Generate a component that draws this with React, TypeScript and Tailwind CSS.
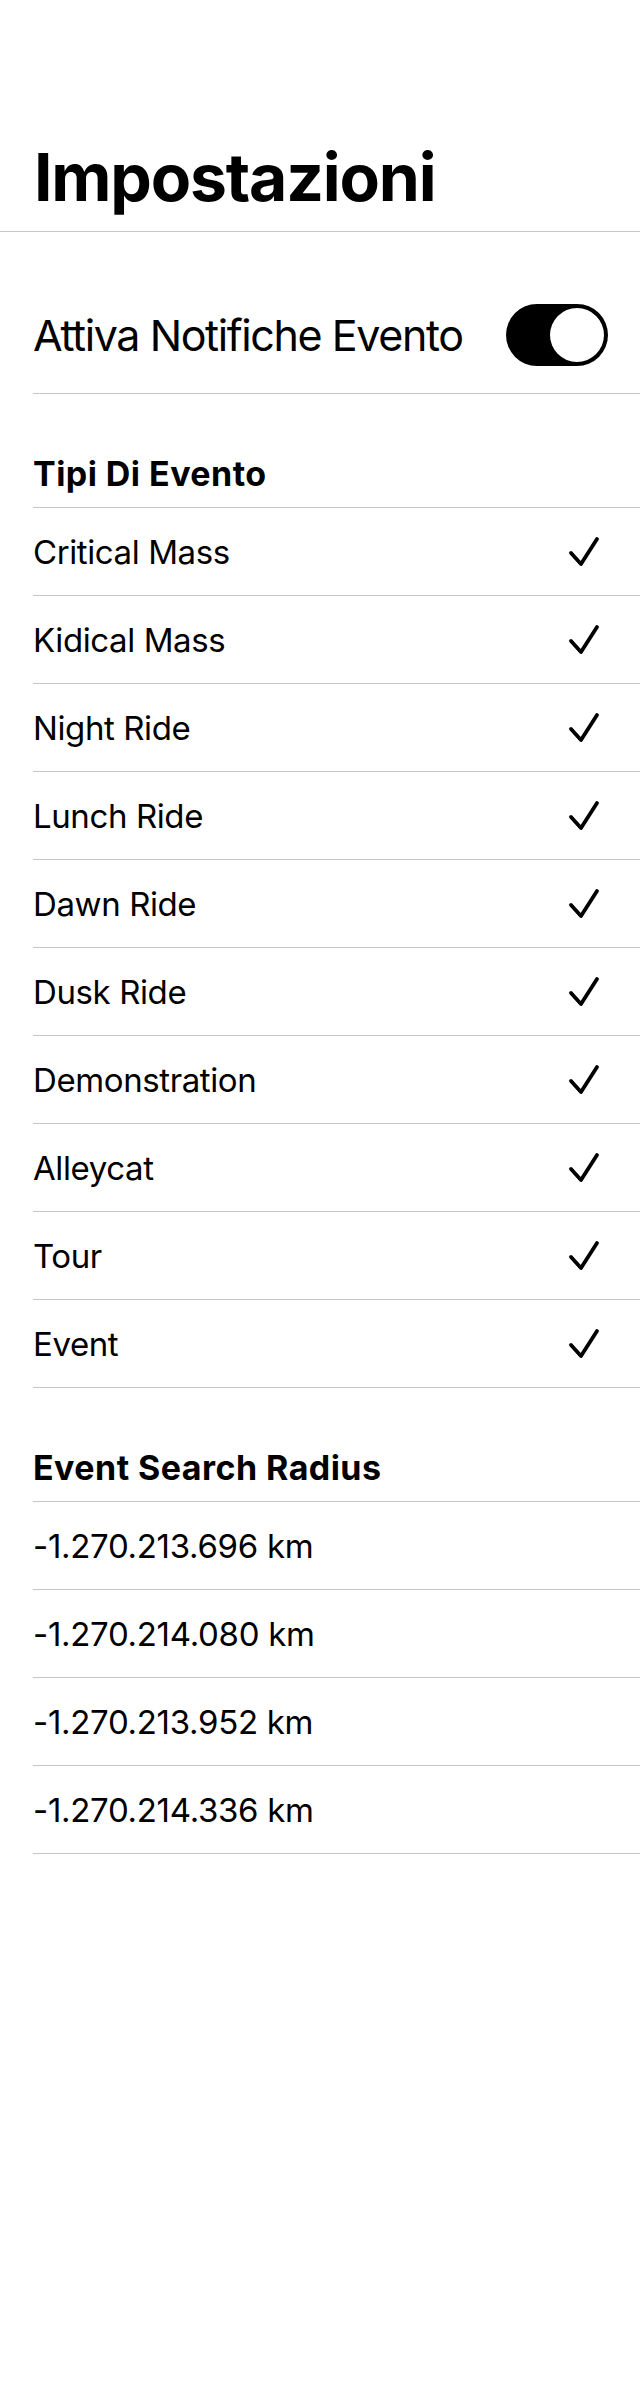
import React from "react";

const eventTypes = [
  "Critical Mass",
  "Kidical Mass",
  "Night Ride",
  "Lunch Ride",
  "Dawn Ride",
  "Dusk Ride",
  "Demonstration",
  "Alleycat",
  "Tour",
  "Event",
];

const radii = [
  "-1.270.213.696 km",
  "-1.270.214.080 km",
  "-1.270.213.952 km",
  "-1.270.214.336 km",
];

function Check() {
  return (
    <svg width="32" height="32" viewBox="0 0 32 32" fill="none" aria-hidden>
      <path
        d="M3 17 L13 28 L29 3"
        stroke="black"
        strokeWidth="3.8"
        strokeLinecap="round"
        strokeLinejoin="round"
      />
    </svg>
  );
}

export default function App() {
  return (
    <div
      className="w-[640px] min-h-[2400px] bg-white text-black"
      style={{ fontFamily: "Inter, 'Noto Sans', sans-serif" }}
    >
      <header className="pt-[144px] pb-[21px] pl-[34px] border-b border-[#c6c6c8]">
        <h1 className="text-[66px] leading-[66px] font-bold tracking-[-1.2px]">Impostazioni</h1>
      </header>

      <div className="ml-[33px]">
        <div className="flex items-center justify-between pt-[72px] pb-[27px] pr-[32px] border-b border-[#c6c6c8]">
          <span className="text-[43px] leading-[45px] tracking-[-1.4px]">Attiva Notifiche Evento</span>
          <div className="w-[102px] h-[62px] rounded-full bg-black flex items-center justify-end pr-[4px]">
            <div className="w-[54px] h-[54px] rounded-full bg-white" />
          </div>
        </div>

        <div className="pt-[63px] pb-[16px] border-b border-[#c6c6c8]">
          <h2 className="text-[34px] leading-[34px] font-bold tracking-[0.45px]">Tipi Di Evento</h2>
        </div>
        {eventTypes.map((t) => (
          <div
            key={t}
            className="h-[88px] flex items-center justify-between pr-[40px] border-b border-[#c6c6c8]"
          >
            <span className="text-[33px] leading-[33px] pt-[2px] tracking-[-0.4px]">{t}</span>
            <Check />
          </div>
        ))}

        <div className="pt-[63px] pb-[16px] border-b border-[#c6c6c8]">
          <h2 className="text-[34px] leading-[34px] font-bold tracking-[0.45px]">Event Search Radius</h2>
        </div>
        {radii.map((r) => (
          <div
            key={r}
            className="h-[88px] flex items-center border-b border-[#c6c6c8]"
          >
            <span className="text-[33px] leading-[33px] pt-[2px] tracking-[-0.3px]">{r}</span>
          </div>
        ))}
      </div>
    </div>
  );
}
